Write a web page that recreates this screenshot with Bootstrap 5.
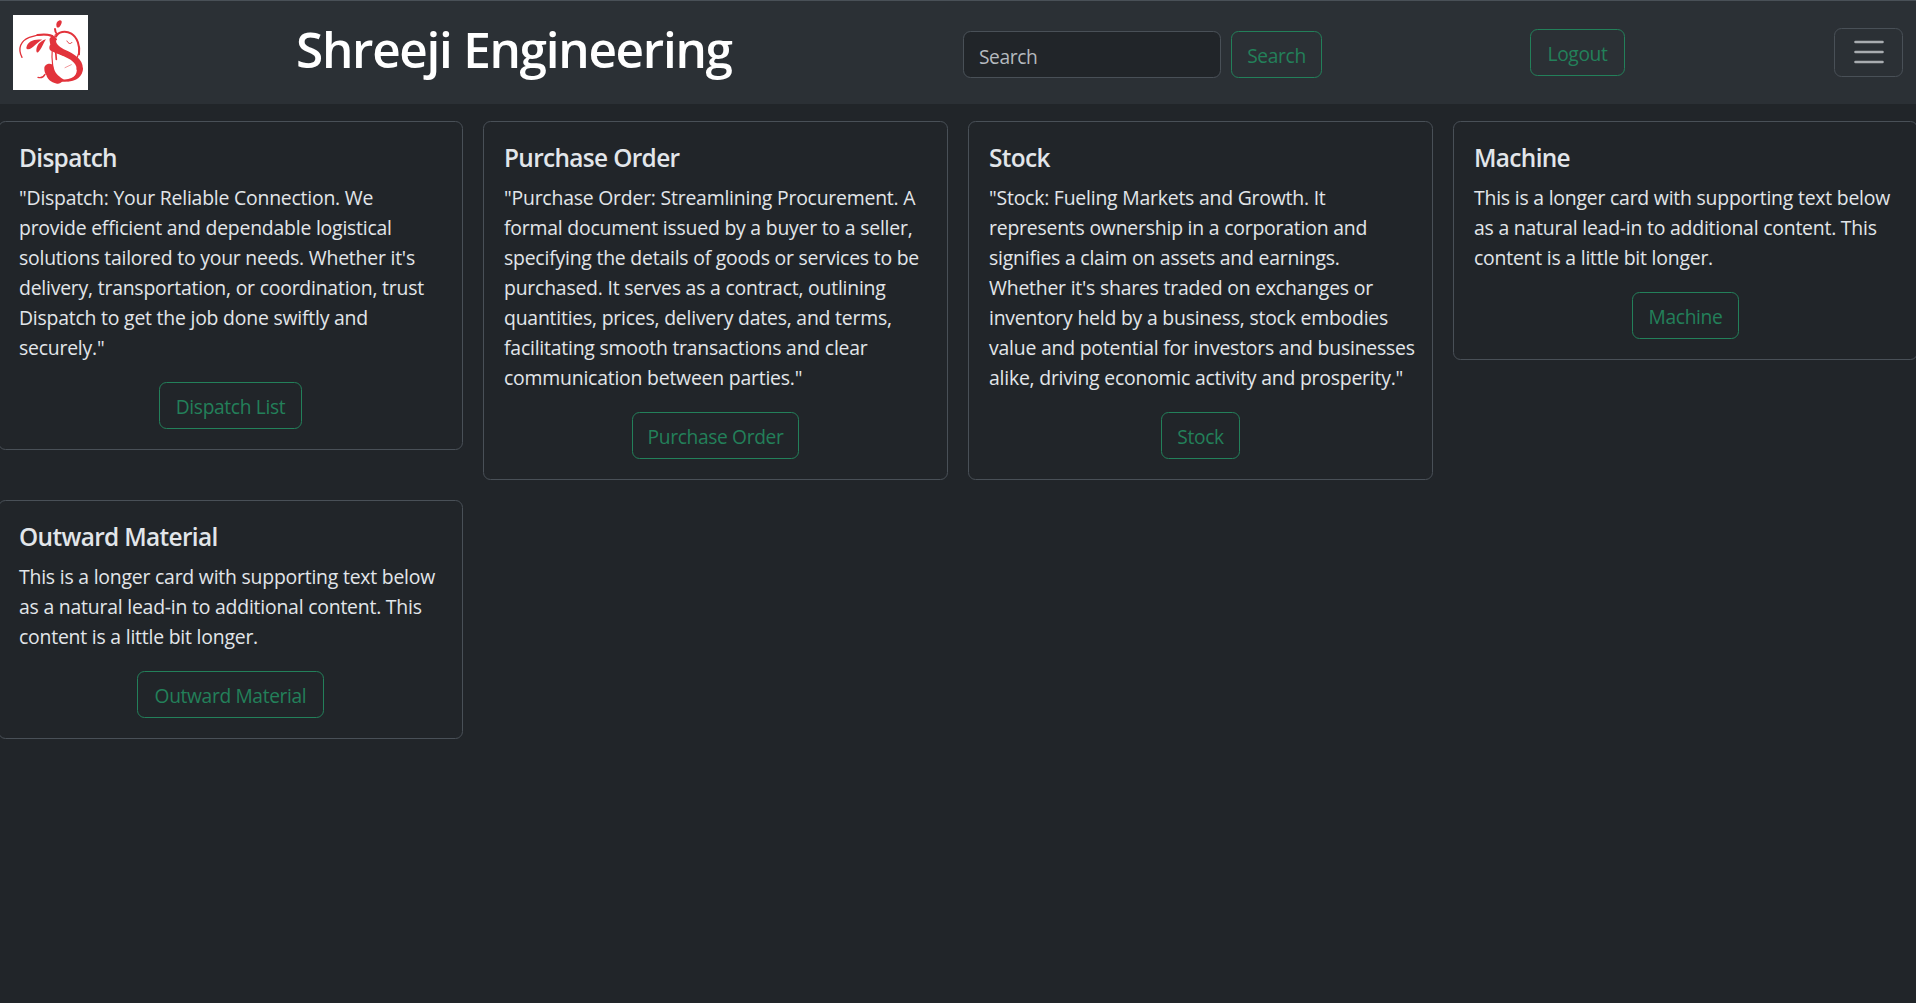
<!DOCTYPE html>
<html lang="en" data-bs-theme="dark">
<head>
<meta charset="utf-8">
<meta name="viewport" content="width=device-width, initial-scale=1">
<title>Shreeji Engineering</title>
<link href="https://cdn.jsdelivr.net/npm/bootstrap@5.3.0/dist/css/bootstrap.min.css" rel="stylesheet">
<style>
  html { font-size: 20px; overflow: hidden; }
  body { font-family: "Open Sans", "Noto Sans", sans-serif; color: #e2e6ea; background: #212529; overflow-x: hidden; min-height: 100vh; }
  .topbar { height: 104px; border-top: 1px solid #495057; background: #2b3035; padding: 0 13px; }
  .logo { width: 75px; height: 75px; }
  .site-title { font-size: 49.5px; font-weight: 600; line-height: 60px; letter-spacing: -1.3px; color: #fff; margin: 0 0 8px 208px; width: 437px; }
  .search-form { margin: 4px 0 0 230px; gap: 10px; }
  .search-form .form-control { width: 258px; height: 47px; padding: 9px 15px 6px; font-size: 19.2px; letter-spacing: -.4px; border-color: #495057; }
  .form-control::placeholder { color: #b5babf; }
  .btn-outline-success { height: 47px; padding: 9px 0 7px; font-size: 19.2px; line-height: 29px; letter-spacing: -.35px; border-color: #23805a; color: #23805a; }
  .w-search { width: 91px; } .w-logout { width: 95px; } .w-dispatch { width: 143px; }
  .w-purchase { width: 167px; } .w-stock { width: 79px; } .w-machine { width: 107px; } .w-outward { width: 187px; }
  .logout-box { margin-left: 208px; }
  .navbar-toggler { width: 69px; height: 49px; padding: 0; margin-bottom: 1px; border-color: #495057; display: flex; align-items: center; justify-content: center; }
  .tiles { width: 1940px; margin: 17px 0 0 -12px; row-gap: 20px; }
  .tiles > .col { padding: 0 10px; }
  .tiles .card { border-color: #495057; border-radius: 7.5px; background: #212529; color: inherit; }
  .card-body { padding: 21px 20px 20px; color: inherit; }
  .card-title { font-size: 24.4px; font-weight: 600; line-height: 30px; letter-spacing: -.65px; margin-bottom: 10px; }
  .card-text { font-size: 19.4px; line-height: 30px; letter-spacing: -.21px; margin-bottom: 19px; white-space: nowrap; }
</style>
<script src="https://cdn.jsdelivr.net/npm/bootstrap@5.3.0/dist/js/bootstrap.bundle.min.js"></script>
</head>
<body>
<nav class="topbar d-flex align-items-center">
  <a href="#" class="d-flex flex-shrink-0" aria-label="Home">
    <svg class="logo" viewBox="39 45 225 225">
      <path fill="#fff" d="M39 45h225v225H39z"/>
      <g fill="none" stroke="#e2333b" stroke-linecap="round" stroke-linejoin="round">
        <path stroke-width="4" d="M66 172C52 146 62 122 88 112C112 103 138 102 158 107"/>
        <path stroke-width="6" d="M112 105C135 101 158 105 168 118"/>
        <path stroke-width="6" d="M165 87C165 96 168 100 172 104M168 110C174 95 196 90 214 101C232 112 241 139 237 163"/>
        <path stroke-width="3.5" d="M237 140C239 155 236 163 232 172M166 104C157 130 153 160 158 196"/>
        <path stroke-width="5" d="M167 154L169 178"/>
        <path stroke-width="4" d="M114 232C122 234 131 231 135 223"/>
        <path stroke-width="3" d="M201 123C206 132 211 133 216 127"/>
        <path stroke-width="1.5" d="M195 203L214 194"/>
        <path stroke-width="7" d="M180 240C206 246 229 236 239 212"/>
        <path stroke-width="19" d="M158 120C158 136 169 147 188 157C212 168 239 180 239 205"/>
      </g>
      <g fill="#e2333b">
        <path d="M170 81C167 72 170 64 179 61C187 60 187 69 181 77C178 82 173 85 170 81Z"/>
        <path d="M79 143C83 124 101 116 127 119C110 126 99 147 84 148Q79 148 79 143ZM109 153C109 137 118 124 138 118C131 127 129 139 117 154Q111 162 109 153Z"/>
        <path d="M151 133C146 143 147 151 156 154C165 160 179 163 191 168L185 148Z"/>
        <path d="M230 205C233 222 221 236 201 244C226 245 249 231 249 203Z"/>
        <path d="M133 206C132 190 158 186 161 200C163 217 173 226 190 238C188 246 180 253 171 251C151 246 142 237 139 225C135 220 133 213 133 206Z"/>
      </g>
    </svg>
  </a>
  <h1 class="site-title text-nowrap">Shreeji Engineering</h1>
  <form class="search-form d-flex" role="search">
    <input class="form-control" type="search" placeholder="Search" aria-label="Search">
    <button class="btn btn-outline-success w-search" type="button">Search</button>
  </form>
  <div class="logout-box"><a href="#" class="btn btn-outline-success w-logout">Logout</a></div>
  <button class="navbar-toggler border rounded ms-auto" type="button" aria-label="Toggle navigation">
    <svg width="30" height="24" viewBox="0 0 30 24" stroke="#a8acb0" stroke-width="2.6" stroke-linecap="round"><path d="M1.5 2H28.5M1.5 12H28.5M1.5 22H28.5"/></svg>
  </button>
</nav>

<main class="tiles row row-cols-4 gx-0 align-items-start">
  <div class="col"><div class="card"><div class="card-body">
    <h5 class="card-title">Dispatch</h5>
    <p class="card-text">"Dispatch: Your Reliable Connection. We<br>provide efficient and dependable logistical<br>solutions tailored to your needs. Whether it's<br>delivery, transportation, or coordination, trust<br>Dispatch to get the job done swiftly and<br>securely."</p>
    <div class="d-flex justify-content-center"><a href="#" class="btn btn-outline-success w-dispatch">Dispatch List</a></div>
  </div></div></div>
  <div class="col"><div class="card"><div class="card-body">
    <h5 class="card-title">Purchase Order</h5>
    <p class="card-text">"Purchase Order: Streamlining Procurement. A<br>formal document issued by a buyer to a seller,<br>specifying the details of goods or services to be<br>purchased. It serves as a contract, outlining<br>quantities, prices, delivery dates, and terms,<br>facilitating smooth transactions and clear<br>communication between parties."</p>
    <div class="d-flex justify-content-center"><a href="#" class="btn btn-outline-success w-purchase">Purchase Order</a></div>
  </div></div></div>
  <div class="col"><div class="card"><div class="card-body">
    <h5 class="card-title">Stock</h5>
    <p class="card-text">"Stock: Fueling Markets and Growth. It<br>represents ownership in a corporation and<br>signifies a claim on assets and earnings.<br>Whether it's shares traded on exchanges or<br>inventory held by a business, stock embodies<br>value and potential for investors and businesses<br>alike, driving economic activity and prosperity."</p>
    <div class="d-flex justify-content-center"><a href="#" class="btn btn-outline-success w-stock">Stock</a></div>
  </div></div></div>
  <div class="col"><div class="card"><div class="card-body">
    <h5 class="card-title">Machine</h5>
    <p class="card-text">This is a longer card with supporting text below<br>as a natural lead-in to additional content. This<br>content is a little bit longer.</p>
    <div class="d-flex justify-content-center"><a href="#" class="btn btn-outline-success w-machine">Machine</a></div>
  </div></div></div>
  <div class="col"><div class="card"><div class="card-body">
    <h5 class="card-title">Outward Material</h5>
    <p class="card-text">This is a longer card with supporting text below<br>as a natural lead-in to additional content. This<br>content is a little bit longer.</p>
    <div class="d-flex justify-content-center"><a href="#" class="btn btn-outline-success w-outward">Outward Material</a></div>
  </div></div></div>
</main>
</body>
</html>
